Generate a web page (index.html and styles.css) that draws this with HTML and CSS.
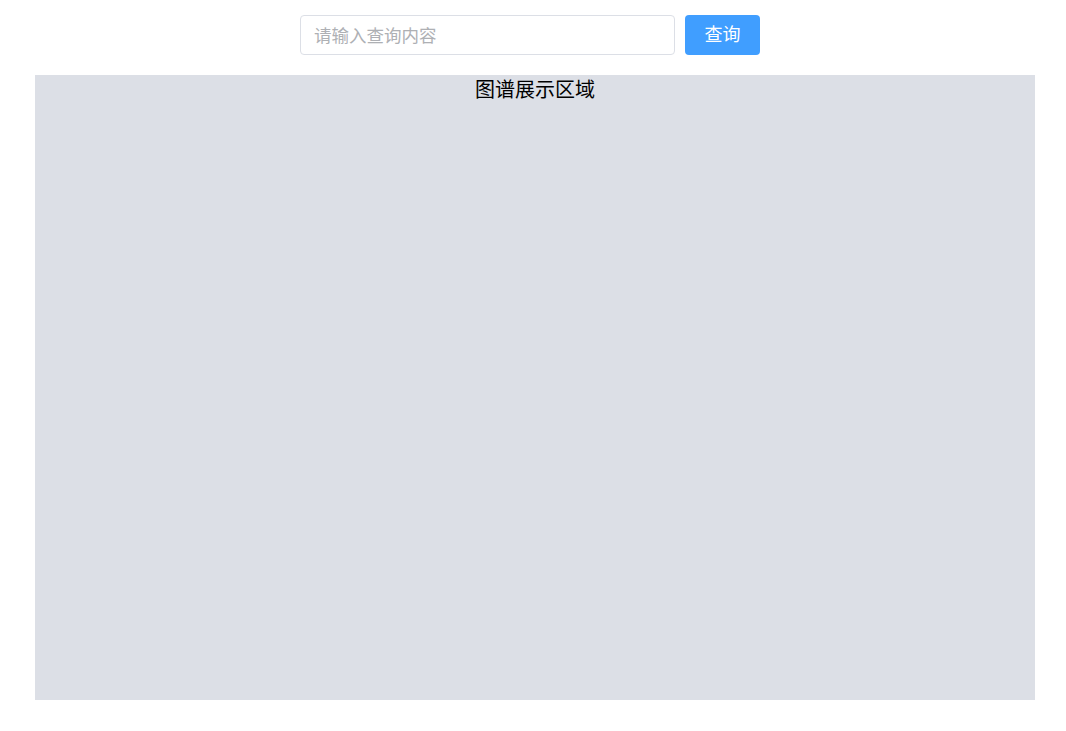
FILE: index.html
```html
<!DOCTYPE html>
<html lang="zh">
<head>
<meta charset="utf-8">
<title>图谱</title>
<link rel="stylesheet" href="styles.css">
</head>
<body>
<div class="page">
  <div class="search-row">
    <input class="search-input" type="text" placeholder="请输入查询内容">
    <button class="search-btn" type="button">查询</button>
  </div>
  <div class="graph-area">
    <div class="graph-title">图谱展示区域</div>
  </div>
</div>
</body>
</html>
```

FILE: styles.css
```css
html, body {
  margin: 0;
  padding: 0;
  background: #ffffff;
}
body {
  font-family: "Noto Sans CJK SC", "Noto Sans", sans-serif;
}
.page {
  display: flex;
  flex-direction: column;
  align-items: center;
  padding-left: 4px;
  padding-top: 15px;
}
.search-row {
  display: flex;
  gap: 10px;
  padding-right: 10px;
}
.search-input {
  box-sizing: border-box;
  width: 375px;
  height: 40px;
  border: 1px solid #dcdfe6;
  border-radius: 4px;
  padding: 0 12px 2px 13px;
  font-family: "Noto Sans CJK SC", sans-serif;
  font-size: 17.5px;
  color: #606266;
  outline: none;
}
.search-input::placeholder {
  color: #aeb0b4;
}
.search-btn {
  box-sizing: border-box;
  width: 75px;
  height: 40px;
  border: none;
  border-radius: 4px;
  background: #409eff;
  color: #ffffff;
  font-family: "Noto Sans CJK SC", sans-serif;
  font-size: 18px;
  padding: 0 0 5px 0;
  cursor: pointer;
}
.graph-area {
  box-sizing: border-box;
  margin-top: 20px;
  width: 1000px;
  height: 625px;
  background: #dcdfe6;
}
.graph-title {
  text-align: center;
  font-size: 20px;
  line-height: 28px;
  color: #000000;
}
```
